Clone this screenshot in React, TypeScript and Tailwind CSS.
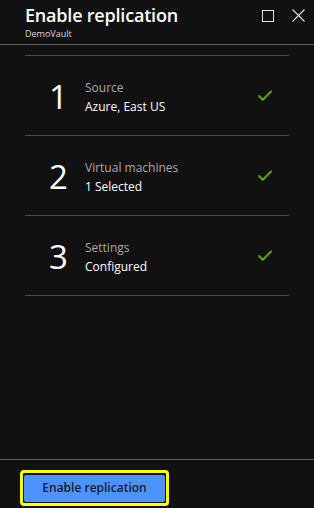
import { Check } from 'lucide-react';

const steps = [
  { n: '1', label: 'Source', value: 'Azure, East US' },
  { n: '2', label: 'Virtual machines', value: '1 Selected' },
  { n: '3', label: 'Settings', value: 'Configured' },
];

export default function App() {
  return (
    <div
      className="h-[508px] w-full bg-[#111111] text-white flex flex-col"
      style={{ fontFamily: '"Open Sans", "Noto Sans", sans-serif' }}
    >
      {/* Header */}
      <div className="h-[45px] border-b border-[#5f5f5f] flex items-start justify-between pl-[25px] pr-[9px] pt-[2px]">
        <div>
          <div className="text-[18px] font-semibold leading-[26px] tracking-[-0.2px]">Enable replication</div>
          <div className="text-[9px] leading-[12px] text-[#d8d8d8]">DemoVault</div>
        </div>
        <div className="flex items-center gap-[18px] pt-[7px]">
          <div className="w-[12px] h-[12px] border border-[#e0e0e0]" />
          <svg width="13" height="13" viewBox="0 0 13 13" className="text-[#e0e0e0]">
            <path d="M0.5 0.5 L12.5 12.5 M12.5 0.5 L0.5 12.5" stroke="currentColor" strokeWidth="1.1" />
          </svg>
        </div>
      </div>

      {/* Steps */}
      <div className="flex-1 px-[25px] pt-[10px]">
        <div className="border-t border-[#4a4a4a]">
          {steps.map((s) => (
            <div key={s.n} className="h-[80px] border-b border-[#4a4a4a] flex items-center pl-[24px] pr-[15px]">
              <div className="w-[36px] text-[33px] leading-none font-medium pt-[2px]">{s.n}</div>
              <div className="flex-1 pt-[3px]">
                <div className="text-[12px] leading-[19px] text-[#a8a8a8]">{s.label}</div>
                <div className="text-[12px] leading-[19px] text-white">{s.value}</div>
              </div>
              <Check className="w-[18px] h-[18px] text-[#5ca800] mt-[1px]" strokeWidth={2.6} />
            </div>
          ))}
        </div>
      </div>

      {/* Footer */}
      <div className="h-[49px] border-t border-[#5f5f5f] pl-[20px] pt-[10px]">
        <div className="inline-block rounded-[4px] border-[3px] border-[#ffff00] p-[1px]">
          <button className="w-[141px] h-[27px] bg-[#4c93ff] rounded-[2px] text-[12px] font-semibold text-[#1a1a2a]">
            Enable replication
          </button>
        </div>
      </div>
    </div>
  );
}
